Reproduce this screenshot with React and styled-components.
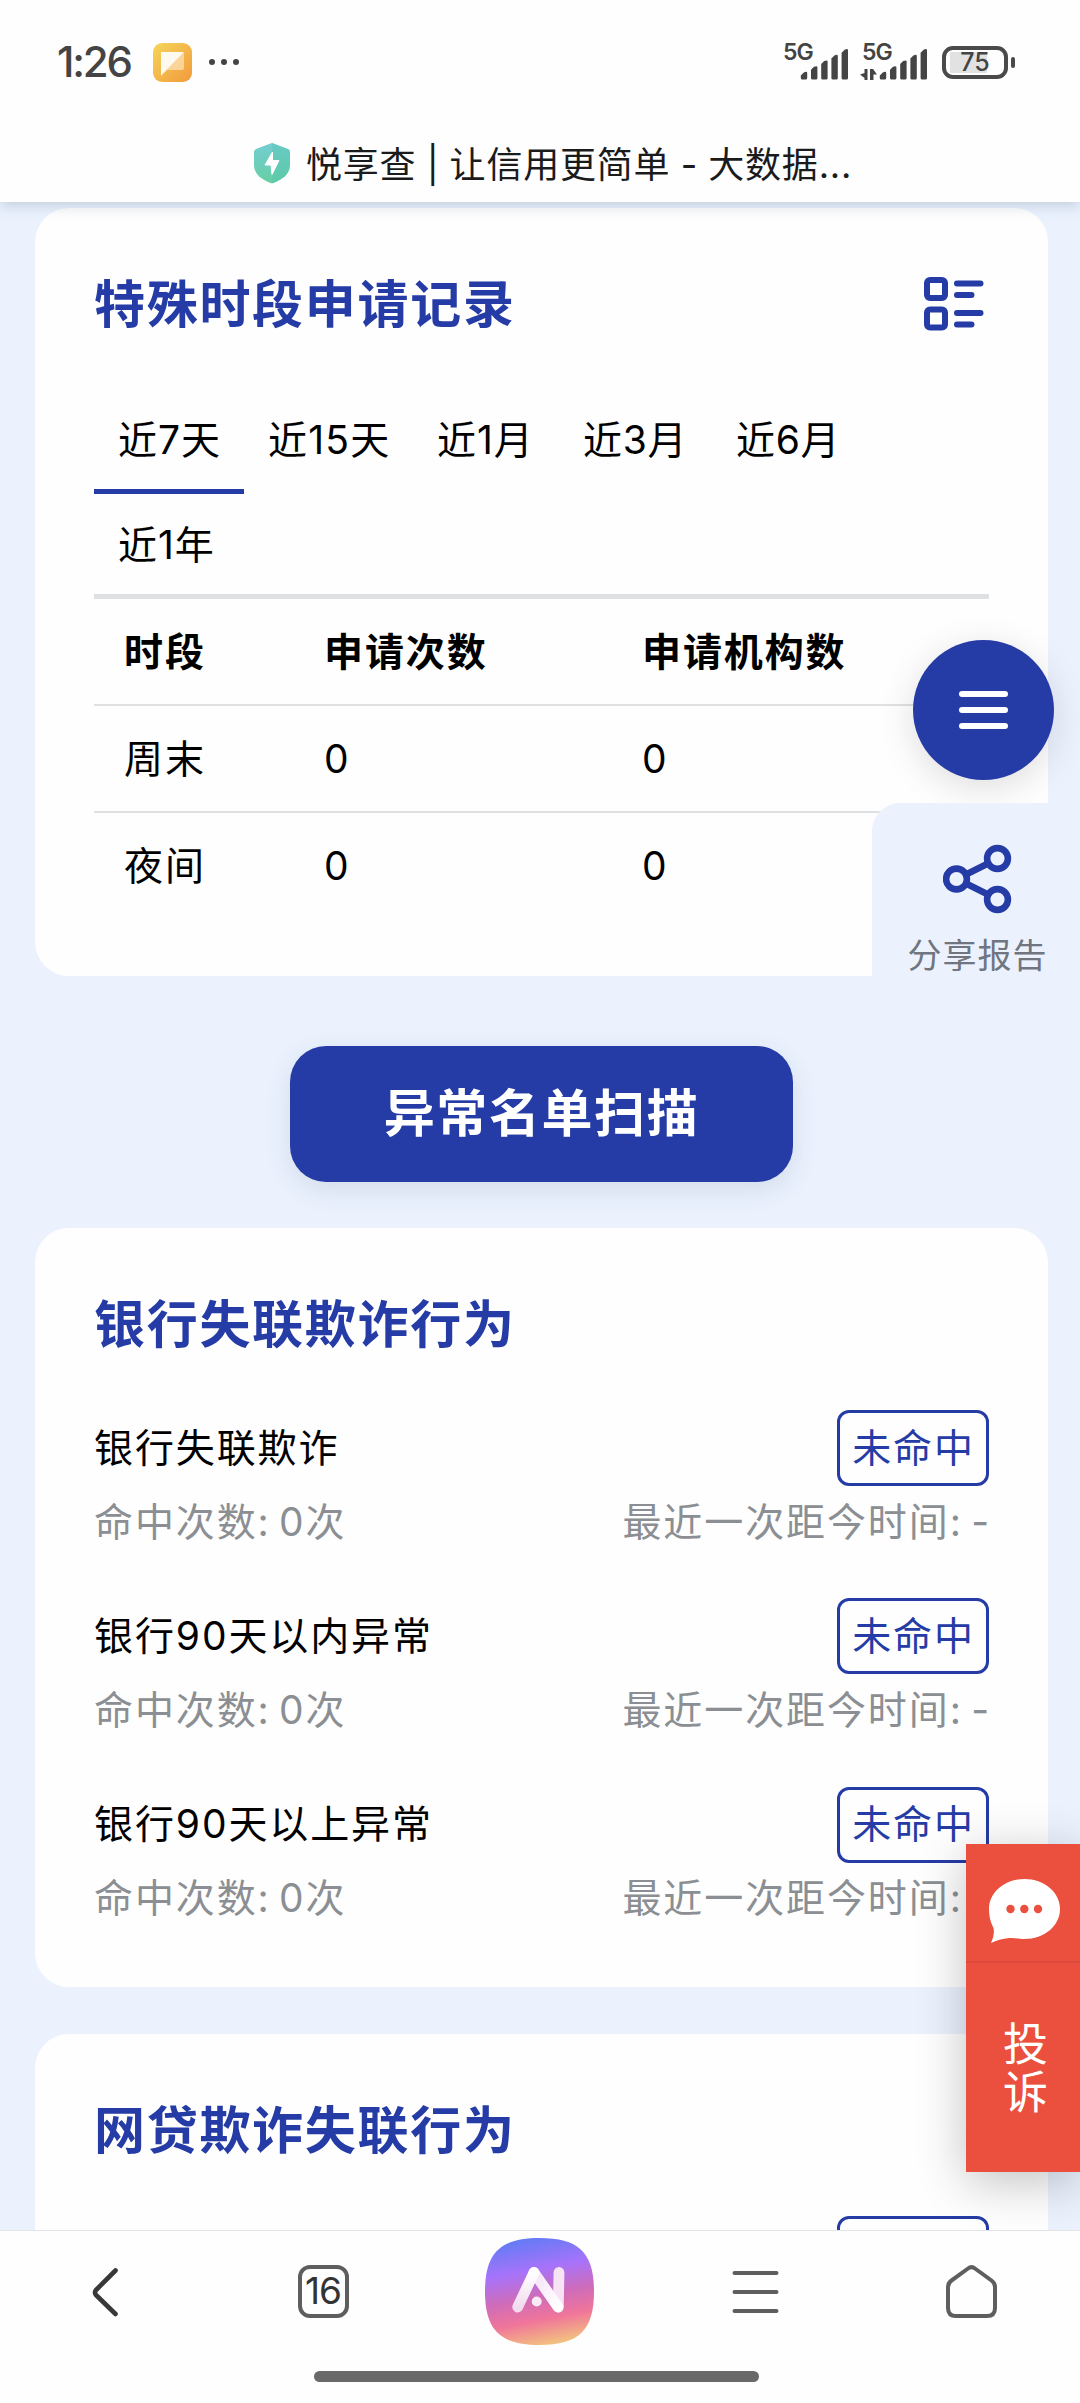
import styled, { createGlobalStyle, ThemeProvider, css } from "styled-components";

const theme = {
  colors: {
    primary: "#253ba5",
    page: "#ebf2fe",
    line: "#dee0e2",
    muted: "#8b8f93",
    danger: "#eb4f3e",
    icon: "#5e5e5e",
  },
};

const GlobalStyle = createGlobalStyle`
  * {
    box-sizing: border-box;
  }

  body {
    margin: 0;
    background: #fff;
  }
`;

const Screen = styled.div`
  position: relative;
  display: flex;
  flex-direction: column;
  width: 1080px;
  height: 2403px;
  overflow: hidden;
  background: #fefefe;
  color: #000;
  font-family: Inter, "Noto Sans CJK SC", sans-serif;
  font-size: 39px;
  line-height: 1.2;
  letter-spacing: 1.9px;
  white-space: nowrap;
`;

/* status bar + title */

const Header = styled.header`
  position: relative;
  z-index: 1;
  flex: none;
  height: 202px;
  background: #fefefe;
  box-shadow: 0 3px 14px rgba(60, 80, 100, 0.24);
`;

const StatusBar = styled.div`
  display: flex;
  align-items: center;
  height: 124px;
  padding: 0 64px 0 57px;
  color: #444;
  letter-spacing: 0;
`;

const Clock = styled.span`
  width: 96px;
  font-size: 42px;
  font-weight: 500;
  letter-spacing: -2.2px;
`;

const StatusRight = styled.div`
  display: flex;
  align-items: center;
  margin-left: auto;
`;

const Battery = styled.div`
  position: relative;
  display: flex;
  align-items: center;
  justify-content: center;
  width: 66px;
  height: 33px;
  margin-left: 15px;
  margin-right: 8px;
  border: 4px solid #4a4a4a;
  border-radius: 11px;
  background: linear-gradient(#e2e2e2, #e2e2e2) 4px 2px / 37px 21px no-repeat;
  font-size: 25px;
  font-weight: 500;

  &::after {
    content: "";
    position: absolute;
    right: -11px;
    top: 7px;
    width: 4px;
    height: 11px;
    border-radius: 2px;
    background: #4a4a4a;
  }
`;

const TitleRow = styled.div`
  display: flex;
  align-items: center;
  height: 78px;
  padding-left: 253px;
  color: #1b1b1b;
  font-size: 36px;
  letter-spacing: 0.8px;
`;

const TitleText = styled.span`
  margin: 5px 0 0 15px;
  word-spacing: -0.7px;
`;

/* report cards */

const Content = styled.main`
  flex: 1;
  min-height: 0;
  overflow: hidden;
  padding: 6px 32px 0 35px;
  background: ${({ theme }) => theme.colors.page};
`;

const Card = styled.section`
  height: ${(props) => props.h}px;
  margin-top: ${(props) => props.mt || 0}px;
  padding: 58px 59px 0;
  border-radius: 34px;
  background: #fefefe;
`;

const CardHead = styled.div`
  display: flex;
  align-items: center;
  justify-content: space-between;
  height: 76px;
  padding-right: 5px;
`;

const CardTitle = styled.h2`
  margin: 1px 0 0;
  color: ${({ theme }) => theme.colors.primary};
  font-size: 51px;
  font-weight: 700;
  letter-spacing: 1.7px;
`;

const Tabs = styled.div`
  display: flex;
  flex-wrap: wrap;
  align-content: flex-start;
  height: 210px;
  margin-top: 47px;
  border-bottom: 5px solid ${({ theme }) => theme.colors.line};
`;

const Tab = styled.div`
  width: ${(props) => props.w}px;
  height: 105px;
  padding-left: 24px;
  border-bottom: 5px solid transparent;
  line-height: 101px;
  letter-spacing: ${(props) => props.ls || 1}px;
  ${({ active, theme }) =>
    active &&
    css`
      border-color: ${theme.colors.primary};
    `}

  &:last-child {
    height: 100px;
    border: none;
  }
`;

const TableRow = styled.div`
  display: grid;
  grid-template-columns: 200px 318px 1fr;
  height: 107px;
  line-height: 105px;
  font-weight: ${(props) => (props.head ? 700 : 400)};
  border-bottom: ${({ last, theme }) =>
    last ? "none" : `2px solid ${theme.colors.line}`};

  & > span {
    padding-left: 30px;
  }
`;

const SectionButton = styled.div`
  display: flex;
  align-items: center;
  justify-content: center;
  width: 503px;
  height: 136px;
  margin: 70px auto 46px 255px;
  border-radius: 36px;
  background: ${({ theme }) => theme.colors.primary};
  box-shadow: 0 8px 26px rgba(40, 60, 90, 0.12);
  color: #fff;
  font-size: 51px;
  font-weight: 700;
  letter-spacing: 1.6px;
`;

const Items = styled.div`
  margin-top: 48px;
`;

const Item = styled.div`
  height: 188.4px;
`;

const ItemLine = styled.div`
  display: flex;
  align-items: center;
  justify-content: space-between;
  height: 76px;
`;

const SubLine = styled(ItemLine)`
  height: 72px;
  margin-right: -2px;
  color: ${({ theme }) => theme.colors.muted};
  word-spacing: -4.5px;
`;

const Badge = styled.span`
  display: flex;
  align-items: center;
  justify-content: center;
  width: 152px;
  height: 76px;
  margin-left: auto;
  padding-left: 1px;
  border: 3px solid ${({ theme }) => theme.colors.primary};
  border-radius: 12px;
  color: ${({ theme }) => theme.colors.primary};
`;

/* floating controls */

const MenuFab = styled.div`
  position: absolute;
  left: 913px;
  top: 640px;
  display: flex;
  flex-direction: column;
  align-items: center;
  justify-content: center;
  gap: 10px;
  width: 141px;
  height: 140px;
  border-radius: 50%;
  background: ${({ theme }) => theme.colors.primary};
  box-shadow: 0 8px 36px rgba(0, 0, 0, 0.13);

  & > i {
    width: 49px;
    height: 6px;
    border-radius: 3px;
    background: #fff;
  }
`;

const SharePanel = styled.div`
  position: absolute;
  left: 872px;
  top: 803px;
  display: flex;
  flex-direction: column;
  align-items: center;
  width: 208px;
  height: 200px;
  padding-top: 41px;
  padding-left: 3px;
  border-top-left-radius: 28px;
  background: ${({ theme }) => theme.colors.page};
  color: #70757f;
  font-size: 34px;
  letter-spacing: 1px;
`;

const ShareLabel = styled.span`
  margin-top: 16px;
  line-height: 52px;
`;

const Complaint = styled.div`
  position: absolute;
  left: 966px;
  top: 1844px;
  width: 114px;
  height: 328px;
  background: ${({ theme }) => theme.colors.danger};
  box-shadow: 0 10px 50px rgba(0, 0, 0, 0.24);
  color: #fff;
`;

const ComplaintIcon = styled.div`
  display: flex;
  justify-content: center;
  height: 119px;
  padding: 35px 0 0 2px;
  border-bottom: 2px solid #dc4a3b;
`;

const ComplaintText = styled.div`
  width: 112px;
  padding-top: 58px;
  font-size: 45px;
  line-height: 112px;
  letter-spacing: 3px;
  writing-mode: vertical-rl;
`;

/* browser toolbar */

const Toolbar = styled.footer`
  position: relative;
  flex: none;
  height: 173px;
  border-top: 1px solid #e3e4e6;
  background: #fefefe;
`;

const ToolbarButtons = styled.div`
  display: grid;
  grid-template-columns: repeat(5, 1fr);
  align-items: center;
  justify-items: center;
  height: 121px;
  margin: 0 1px 0 -1px;
`;

const TabCount = styled.div`
  display: flex;
  align-items: center;
  justify-content: center;
  width: 51px;
  height: 53px;
  border: 4px solid ${({ theme }) => theme.colors.icon};
  border-radius: 12px;
  color: #333;
  font-size: 37px;
  letter-spacing: -1px;
`;

const HomeIndicator = styled.div`
  width: 445px;
  height: 11px;
  margin: 19px auto 0 314px;
  border-radius: 6px;
  background: #696969;
`;

const NoteIcon = () => (
  <svg width="39" height="39" viewBox="0 0 39 39">
    <defs>
      <linearGradient id="note" x1="0" y1="0" x2="1" y2="1">
        <stop offset="0" stopColor="#f4d65a" />
        <stop offset="1" stopColor="#f29a3c" />
      </linearGradient>
    </defs>
    <rect width="39" height="39" rx="9" fill="url(#note)" />
    <path d="M9 9H29Q31 9 31 11V25Q31 27 29 27H14L8 33V10Q8 9 9 9Z" fill="#fbdcae" opacity="0.8" />
    <path d="M9 9H31L8 32.5V10Q8 9 9 9Z" fill="#fffaf0" />
  </svg>
);

const MoreDots = styled.div`
  display: flex;
  gap: 6px;
  margin-left: 17px;

  & > i {
    width: 6px;
    height: 6px;
    border-radius: 50%;
    background: #444;
  }
`;

const SignalBox = styled.div`
  position: relative;
  width: 64px;
  height: 36px;
  margin-left: 15px;
`;

const Network = styled.span`
  position: absolute;
  left: -1px;
  top: -2px;
  font-size: 23px;
  font-weight: 600;
  line-height: 20px;
  letter-spacing: -1px;
`;

const Signal = ({ data }) => (
  <SignalBox>
    <Network>5G</Network>
    <svg width="66" height="36" viewBox="0 0 66 36" fill="#444" overflow="visible">
      {[0, 1, 2, 3, 4].map((i) => {
        const x = 16.8 + i * 10.2;
        const top = 28 - i * 5.7;
        return (
          <path
            key={i}
            d={`M${x} ${top + 2.5}L${x + 3} ${top - 0.5}Q${x + 6.4} ${top - 2} ${x + 6.4} ${top}V33q0 1.500-1.500 1.500h-3.400q-1.500 0-1.500-1.500Z`}
          />
        );
      })}
      {data && (
        <path d="M4.500 24V35H1.500V33L-3 29.500L1.500 28V24ZM7 24H10L14 29.500H10.500V35H7Z" />
      )}
    </svg>
  </SignalBox>
);

const Shield = () => (
  <svg width="38" height="42" viewBox="0 0 38 42">
    <defs>
      <linearGradient id="shield" x1="0" y1="0" x2="0" y2="1">
        <stop offset="0" stopColor="#74cdd2" />
        <stop offset="1" stopColor="#66cfa4" />
      </linearGradient>
    </defs>
    <path
      d="M17.5 1.5Q19 .6 20.5 1.5L35 7Q37 8 37 10V23C37 33 28 38 20.5 41Q19 41.5 17.5 41C10 38 1 33 1 23V10Q1 8 3 7Z"
      fill="url(#shield)"
    />
    <path d="M19 .8V41.3C28 38 37 33 37 23V10Q37 8 35 7L20.5 1.5Z" fill="#4dbfa8" opacity="0.3" />
    <path d="M19.5 10L12 23H18L19 32.5L26 18.5H19.5Z" fill="#fff" stroke="#fff" strokeLinejoin="round" />
  </svg>
);

const ListIcon = () => (
  <svg width="60" height="54" viewBox="0 0 60 54" fill="none" stroke="#253ba5" strokeWidth="6" strokeLinecap="round">
    <rect x="3" y="3" width="18" height="18" rx="3" />
    <rect x="3" y="32.5" width="18" height="18" rx="3" />
    <path d="M33 6.500H56.500M33 18H47.500M33 36H56.500M33 47.500H47.500" />
  </svg>
);

const ShareIcon = () => (
  <svg width="70" height="70" viewBox="0 0 70 70" fill="none" stroke="#253ba5" strokeWidth="6.6">
    <circle cx="13.5" cy="35" r="10.4" />
    <circle cx="54.5" cy="14.5" r="10.4" />
    <circle cx="54.5" cy="55.5" r="10.4" />
    <path d="M23 30.500L45 19.500M23 39.500L45 50.500" />
  </svg>
);

const ChatIcon = () => (
  <svg width="71" height="64" viewBox="0 0 71 64">
    <path
      d="M35.500 0C55 0 71 13 71 30S55 60 35.500 60C30 60 26 58.500 20 59Q10 60 2 64Q6 56 4.500 49C2 44 0 38 0 30C0 13 16 0 35.500 0Z"
      fill="#fff"
    />
    <circle cx="21.5" cy="30" r="4.2" fill="#eb4f3e" />
    <circle cx="35.3" cy="30" r="4.2" fill="#eb4f3e" />
    <circle cx="49" cy="30" r="4.2" fill="#eb4f3e" />
  </svg>
);

const BackIcon = () => (
  <svg width="30" height="50" viewBox="0 0 30 50" fill="none" stroke="#383838" strokeWidth="4.6" strokeLinecap="round" strokeLinejoin="round">
    <path d="M23.500 3.500L4 23Q2 25.500 4 28L23.500 47" />
  </svg>
);

const AiLogo = () => (
  <svg width="109" height="107" viewBox="0 0 109 107">
    <defs>
      <linearGradient id="ai" x1="0.38" y1="0" x2="0.58" y2="1">
        <stop offset="0" stopColor="#637bf5" />
        <stop offset="0.3" stopColor="#a773fa" />
        <stop offset="0.55" stopColor="#cf6cb9" />
        <stop offset="0.76" stopColor="#f0759a" />
        <stop offset="1" stopColor="#f2c27e" />
      </linearGradient>
      <linearGradient id="aiA" x1="0" y1="0" x2="0" y2="1">
        <stop offset="0" stopColor="#fff" />
        <stop offset="1" stopColor="#f1dcef" />
      </linearGradient>
      <linearGradient id="aiN" x1="0" y1="0" x2="1" y2="1">
        <stop offset="0" stopColor="#f6e2f6" />
        <stop offset="1" stopColor="#fff" />
      </linearGradient>
    </defs>
    <path
      d="M54.500 0C94 0 109 15 109 53.500S94 107 54.500 107S0 92 0 53.500S15 0 54.500 0Z"
      fill="url(#ai)"
    />
    <g fill="none" strokeWidth="10.8" strokeLinecap="round" strokeLinejoin="round">
      <path d="M74 34.500L73.300 69" stroke="#f6e3f3" />
      <path d="M49 34.500L73 69" stroke="url(#aiN)" />
      <path d="M32.700 69L49 34.500" stroke="url(#aiA)" />
    </g>
    <circle cx="51.7" cy="63.5" r="5" fill="#faeaf5" />
  </svg>
);

const MenuIcon = () => (
  <svg width="47" height="44" viewBox="0 0 47 44" fill="none" stroke="#5e5e5e" strokeWidth="4" strokeLinecap="round">
    <path d="M2.500 3H44.500M2.500 22H44.500M2.500 41H44.500" />
  </svg>
);

const HomeIcon = () => (
  <svg width="51" height="53" viewBox="0 0 51 53" fill="none" stroke="#5e5e5e" strokeWidth="4" strokeLinejoin="round">
    <path d="M22 3.500Q25.500 .8 29 3.500L45.500 15.500Q49 18 49 22V43Q49 51 41 51H10Q2 51 2 43V22Q2 18 5.500 15.500Z" />
  </svg>
);

const tabs = [
  { label: "近7天", w: 150 },
  { label: "近15天", w: 169, ls: 1.2 },
  { label: "近1月", w: 146, ls: 0.9 },
  { label: "近3月", w: 153, ls: 0.7 },
  { label: "近6月", w: 153, ls: 0.7 },
  { label: "近1年", w: 145, ls: 0.9 },
];

const rows = [
  ["周末", "0", "0"],
  ["夜间", "0", "0"],
];

const bankItems = ["银行失联欺诈", "银行90天以内异常", "银行90天以上异常"];

const HitItem = ({ name }) => (
  <Item>
    <ItemLine>
      <span>{name}</span>
      <Badge>未命中</Badge>
    </ItemLine>
    <SubLine>
      <span>命中次数: 0次</span>
      <span>最近一次距今时间: -</span>
    </SubLine>
  </Item>
);

export default function App() {
  return (
    <ThemeProvider theme={theme}>
      <GlobalStyle />
      <Screen>
        <Header>
          <StatusBar>
            <Clock>1:26</Clock>
            <NoteIcon />
            <MoreDots>
              <i />
              <i />
              <i />
            </MoreDots>
            <StatusRight>
              <Signal />
              <Signal data />
              <Battery>75</Battery>
            </StatusRight>
          </StatusBar>
          <TitleRow>
            <Shield />
            <TitleText>悦享查 | 让信用更简单 - 大数据...</TitleText>
          </TitleRow>
        </Header>

        <Content>
          <Card h={768}>
            <CardHead>
              <CardTitle>特殊时段申请记录</CardTitle>
              <ListIcon />
            </CardHead>
            <Tabs>
              {tabs.map((t, i) => (
                <Tab key={t.label} w={t.w} ls={t.ls} active={i === 0 ? 1 : 0}>
                  {t.label}
                </Tab>
              ))}
            </Tabs>
            <TableRow head={1}>
              <span>时段</span>
              <span>申请次数</span>
              <span>申请机构数</span>
            </TableRow>
            {rows.map((r, i) => (
              <TableRow key={r[0]} last={i === rows.length - 1 ? 1 : 0}>
                {r.map((c, j) => (
                  <span key={j}>{c}</span>
                ))}
              </TableRow>
            ))}
          </Card>

          <SectionButton>异常名单扫描</SectionButton>

          <Card h={759}>
            <CardHead>
              <CardTitle>银行失联欺诈行为</CardTitle>
            </CardHead>
            <Items>
              {bankItems.map((name) => (
                <HitItem key={name} name={name} />
              ))}
            </Items>
          </Card>

          <Card h={759} mt={47}>
            <CardHead>
              <CardTitle>网贷欺诈失联行为</CardTitle>
            </CardHead>
            <Items>
              <ItemLine>
                <Badge />
              </ItemLine>
            </Items>
          </Card>
        </Content>

        <Toolbar>
          <ToolbarButtons>
            <BackIcon />
            <TabCount>16</TabCount>
            <AiLogo />
            <MenuIcon />
            <HomeIcon />
          </ToolbarButtons>
          <HomeIndicator />
        </Toolbar>

        <MenuFab>
          <i />
          <i />
          <i />
        </MenuFab>
        <SharePanel>
          <ShareIcon />
          <ShareLabel>分享报告</ShareLabel>
        </SharePanel>
        <Complaint>
          <ComplaintIcon>
            <ChatIcon />
          </ComplaintIcon>
          <ComplaintText>投诉</ComplaintText>
        </Complaint>
      </Screen>
    </ThemeProvider>
  );
}
